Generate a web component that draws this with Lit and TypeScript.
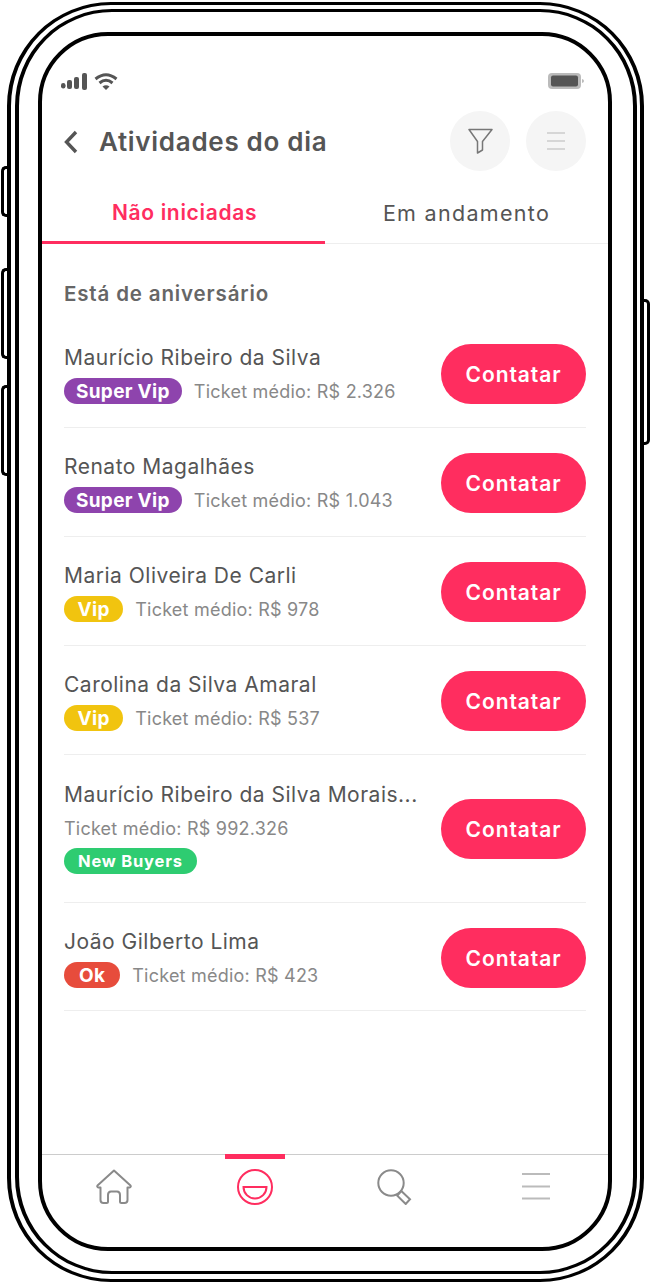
import { LitElement, html, css } from "lit";
import { customElement } from "lit/decorators.js";

type Person = { name: string; ticket: string; tag: string; tone: string; stacked?: boolean };

const people: Person[] = [
  { name: "Maurício Ribeiro da Silva", ticket: "R$ 2.326", tag: "Super Vip", tone: "purple" },
  { name: "Renato Magalhães", ticket: "R$ 1.043", tag: "Super Vip", tone: "purple" },
  { name: "Maria Oliveira De Carli", ticket: "R$ 978", tag: "Vip", tone: "yellow" },
  { name: "Carolina da Silva Amaral", ticket: "R$ 537", tag: "Vip", tone: "yellow" },
  { name: "Maurício Ribeiro da Silva Morais...", ticket: "R$ 992.326", tag: "New Buyers", tone: "green", stacked: true },
  { name: "João Gilberto Lima", ticket: "R$ 423", tag: "Ok", tone: "red" },
];

@customElement("app-root")
export class AppRoot extends LitElement {
  static styles = css`
    :host { display: block; width: 650px; height: 1283px; background: #fff; font-family: Inter, "Liberation Sans", sans-serif; overflow: hidden; }
    .stage { position: relative; width: 650px; height: 1283px; padding: 2px 6px 1px 7px; box-sizing: border-box; }
    .side { position: absolute; width: 8px; box-sizing: border-box; border: 3px solid #000; background: #fff; }
    .left { left: 1px; border-right: 0; border-radius: 5px 0 0 5px; }
    .right { right: 0; border-left: 0; border-radius: 0 5px 5px 0; top: 299px; height: 146px; }
    .b1 { top: 166px; height: 51px; }
    .b2 { top: 268px; height: 91px; }
    .b3 { top: 385px; height: 91px; }
    .outer { position: relative; height: 100%; box-sizing: border-box; border: solid #000; border-width: 3px 4px; border-radius: 104px; padding: 4px 3px 5px 4px; background: #fff; }
    .mid { height: 100%; box-sizing: border-box; border: solid #000; border-width: 3px 4px; border-radius: 97px; padding: 20px 21px 20px 19px; }
    .screen { height: 100%; box-sizing: border-box; border: 4px solid #000; border-radius: 70px; overflow: hidden; display: flex; flex-direction: column; background: #fff; }
    .status { display: flex; justify-content: space-between; align-items: flex-start; padding: 36px 22px 3px 19px; }
    .status svg { display: block; }
    .head { display: flex; align-items: center; padding: 16px 22px 0; height: 60px; }
    .back { width: 14px; height: 26px; margin-right: 21px; flex: none; }
    h1 { margin: 0; flex: 1; font-size: 26px; font-weight: 600; color: #555; letter-spacing: 0.7px; }
    .round { width: 60px; height: 60px; border-radius: 50%; background: #f5f5f5; display: flex; align-items: center; justify-content: center; margin-left: 16px; }
    .tabs { display: grid; grid-template-columns: 283px 1fr; height: 72px; border-bottom: 1px solid #eee; }
    .tab { display: flex; align-items: center; justify-content: center; font-size: 21.5px; color: #555; padding-top: 12px; box-sizing: border-box; letter-spacing: 1.3px; }
    .tab.on { color: #ff2d5f; font-size: 21px; font-weight: 600; border-bottom: 3px solid #ff2d5f; margin-bottom: -1px; padding-top: 13px; padding-left: 2px; letter-spacing: 0.68px; }
    .list { flex: 1; padding: 0 22px; }
    h2 { margin: 0; font-size: 20.5px; font-weight: 600; color: #666; padding-top: 37px; line-height: 26px; height: 38px; letter-spacing: 0.85px; }
    .row { display: flex; align-items: center; justify-content: space-between; padding: 25px 0 23px; border-bottom: 1px solid #eee; }
    .row.tall { padding: 26px 0 25px; }
    .row:last-child { padding-bottom: 22px; }
    .info { display: flex; flex-direction: column; gap: 7px; }
    .name { font-size: 21px; line-height: 26px; padding-top: 1px; color: #555; letter-spacing: 0.5px; white-space: nowrap; }
    .meta { display: flex; align-items: center; gap: 12px; }
    .tall .info { gap: 8px; padding-bottom: 3px; }
    .tall .meta { flex-direction: column; align-items: flex-start; gap: 7px; }
    .ticket { font-size: 18px; line-height: 24px; padding-top: 1px; color: #888; letter-spacing: 0.22px; white-space: nowrap; }
    .chip { height: 26px; border-radius: 13px; color: #fff; font-size: 19px; font-weight: 700; display: inline-flex; align-items: center; letter-spacing: 0.3px; white-space: nowrap; }
    .tall .chip { font-size: 16.5px; letter-spacing: 0.8px; }
    .purple { background: #8e44ad; padding: 0 12px; }
    .yellow { background: #f1c40f; padding: 0 13.5px; }
    .green { background: #2ecc71; padding: 0 14px; }
    .red { background: #e74c3c; padding: 0 15px; }
    .cta { width: 145px; height: 60px; border-radius: 30px; background: #ff2d5f; color: #fff; font-size: 21px; font-weight: 600; display: flex; align-items: center; justify-content: center; letter-spacing: 0.9px; flex: none; }
    .nav { height: 93px; border-top: 1px solid #ccc; display: grid; grid-template-columns: repeat(4, 1fr); flex: none; box-sizing: border-box; padding: 0 2px; }
    .item { display: flex; justify-content: center; padding-top: 14px; position: relative; }
    .bar { position: absolute; top: -1px; left: 50%; width: 60px; margin-left: -30px; height: 5px; background: #ff2d5f; }
  `;

  private row(p: Person) {
    const chip = html`<span class="chip ${p.tone}">${p.tag}</span>`;
    const ticket = html`<span class="ticket">Ticket médio: ${p.ticket}</span>`;
    return html`<div class="row ${p.stacked ? "tall" : ""}">
      <div class="info">
        <div class="name">${p.name}</div>
        <div class="meta">${p.stacked ? html`${ticket}${chip}` : html`${chip}${ticket}`}</div>
      </div>
      <div class="cta">Contatar</div>
    </div>`;
  }

  render() {
    return html`<div class="stage">
      <div class="side left b1"></div>
      <div class="side left b2"></div>
      <div class="side left b3"></div>
      <div class="side right"></div>
      <div class="outer"><div class="mid"><div class="screen">
        <div class="status">
          <svg width="57" height="20" viewBox="0 0 57 20" fill="#555">
            <rect x="0" y="11" width="4.5" height="5.500" rx="2.200"/>
            <rect x="6" y="8" width="5" height="9" rx="2"/>
            <rect x="13" y="5" width="5" height="12" rx="2"/>
            <rect x="21" y="1" width="5" height="17" rx="2"/>
            <path d="M34.500 7Q45-1.500 55.500 7M38.500 11Q45 5.500 51.500 11" fill="none" stroke="#555" stroke-width="3"/>
            <path d="M41.500 14.500Q45 12 48.500 14.500L45 18z"/>
          </svg>
          <svg width="38" height="18" viewBox="0 0 38 18">
            <rect x="0" y="1" width="33" height="16" rx="4" fill="#bbb"/>
            <rect x="3" y="3.500" width="27" height="11" rx="2" fill="#555"/>
            <path d="M34 7q2 .5 2 2t-2 2z" fill="#bbb"/>
          </svg>
        </div>
        <div class="head">
          <svg class="back" viewBox="0 0 14 26" fill="none" stroke="#555" stroke-width="3.400"><path d="M12 4L2.500 14 12 24"/></svg>
          <h1>Atividades do dia</h1>
          <div class="round"><svg width="26" height="26" viewBox="0 0 26 26" fill="none" stroke="#777" stroke-width="1.500" stroke-linejoin="round"><path d="M2 1.500h23L15.500 13.500V22l-5 3V13.500z"/></svg></div>
          <div class="round"><svg width="18" height="18" viewBox="0 0 18 18" fill="none" stroke="#ccc" stroke-width="1.600"><path d="M0 1h18M0 9h18M0 17h18"/></svg></div>
        </div>
        <div class="tabs"><div class="tab on">Não iniciadas</div><div class="tab">Em andamento</div></div>
        <div class="list">
          <h2>Está de aniversário</h2>
          ${people.map((p) => this.row(p))}
        </div>
        <div class="nav">
          <div class="item"><svg width="36" height="36" viewBox="0 0 36 36" fill="none" stroke="#8a8a8a" stroke-width="2" stroke-linejoin="round"><path d="M18 1.500L1.500 16.500q-.8 1.500.8 2H4.500V31q0 3 3 3h3q1.500 0 1.500-1.500V26q0-3.500 3-3.500h6q3 0 3 3.500v6.500q0 1.500 1.500 1.500h3q3 0 3-3V18.500h2.200q1.600-.5.800-2z"/></svg></div>
          <div class="item"><div class="bar"></div><svg width="36" height="36" viewBox="0 0 36 36" fill="none" stroke="#ff2d5f" stroke-width="2"><circle cx="18" cy="18" r="17"/><path d="M6.500 18H29.500A11.500 11.500 0 0 1 6.500 18z"/></svg></div>
          <div class="item"><svg width="36" height="36" viewBox="0 0 36 36" fill="none" stroke="#8a8a8a" stroke-width="2"><circle cx="14" cy="14" r="12.700"/><path d="M24.300 22L33 30.300 28.700 35 20.300 26.700z"/></svg></div>
          <div class="item"><svg width="30" height="36" viewBox="0 0 30 36" fill="none" stroke="#bbb" stroke-width="2"><path d="M1 5h28M1 17.500h28M1 29.500h28"/></svg></div>
        </div>
      </div></div></div>
    </div>`;
  }
}
